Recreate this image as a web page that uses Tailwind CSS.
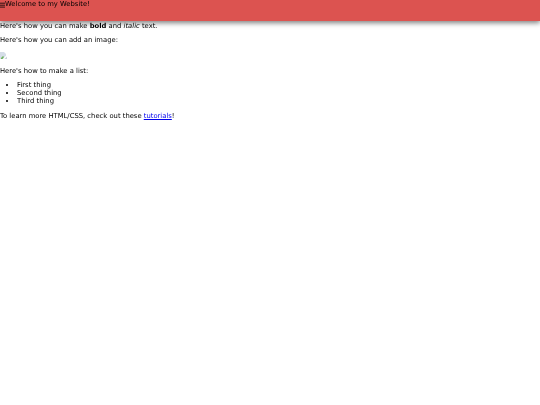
<!DOCTYPE html>
<html lang="en">
<head>
  <meta charset="UTF-8" />
  <title>Welcome</title>
  <script src="https://cdn.jsdelivr.net/npm/@tailwindcss/browser@4"></script>
</head>
<body class="bg-white text-black font-['DejaVu_Sans',sans-serif] text-[6.8px] leading-[7.9px]">
  <header class="h-[21px] bg-[#dc5350] shadow-[0_2px_5px_rgba(0,0,0,0.5)] flex items-start pt-[1px]">
    <svg class="w-[5px] h-[8px] blur-[0.25px]" viewBox="0 0 5 8"><path d="M0 2.2h5M0 4.2h5M0 6.1h5" stroke="#000" stroke-width="0.8" fill="none"/></svg>
    <span class="blur-[0.25px]">Welcome to my Website!</span>
  </header>
  <main class="pt-[1.5px] blur-[0.25px]">
    <p class="mb-[6.75px]">Here's how you can make <b>bold</b> and <i>italic</i> text.</p>
    <p class="mb-[6.75px]">Here's how you can add an image:</p>
    <p class="mb-[6.75px] h-[9px]">
      <svg class="block w-[7px] h-[7px]" viewBox="0 0 7 7"><path d="M0 0h4l2 2v1.5L3 7H0z" fill="#d5dde8"/><path d="M1 6l2-2 1 1-1.5 2H1z" fill="#6fb35f"/><path d="M4.5 7L7 4.5V7z" fill="#c8d0da"/></svg>
    </p>
    <p class="mb-[6.75px]">Here's how to make a list:</p>
    <ul class="mb-[6.75px] pl-[17px] list-disc">
      <li>First thing</li>
      <li>Second thing</li>
      <li>Third thing</li>
    </ul>
    <p>To learn more HTML/CSS, check out these <a href="#" class="text-[#0000ee] underline">tutorials</a>!</p>
  </main>
</body>
</html>
